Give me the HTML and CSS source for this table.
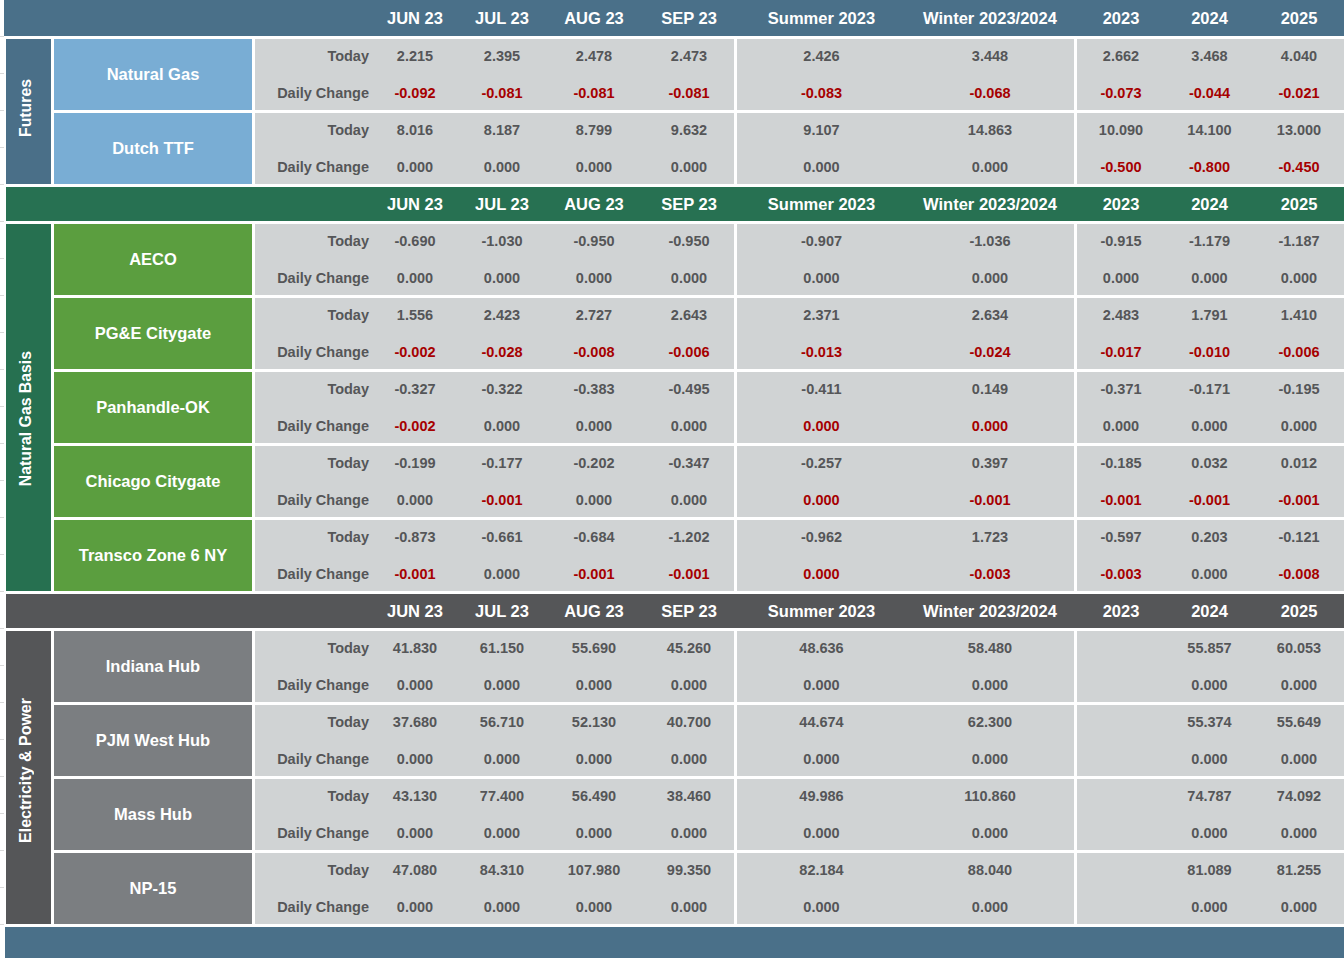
FILE: index.html
```html
<!DOCTYPE html>
<html>
<head>
<meta charset="utf-8">
<link rel="stylesheet" href="styles.css">
</head>
<body>
<div class="page">
  <div class="hdr hdr-top">
    <div class="spacer"></div>
    <div class="data">
      <div class="blk bm"><div></div><div>JUN 23</div><div>JUL 23</div><div>AUG 23</div><div>SEP 23</div></div>
      <div class="blk bs"><div>Summer 2023</div><div>Winter 2023/2024</div></div>
      <div class="blk by"><div>2023</div><div>2024</div><div>2025</div></div>
    </div>
  </div>

  <section class="group g-fut">
    <div class="glabel"><span>Futures</span></div>
    <div class="grows">
      <div class="row">
        <div class="name">Natural Gas</div>
        <div class="data">
          <div class="blk bm"><div class="lbl">Today</div><div>2.215</div><div>2.395</div><div>2.478</div><div>2.473</div><div class="lbl">Daily Change</div><div class="neg">-0.092</div><div class="neg">-0.081</div><div class="neg">-0.081</div><div class="neg">-0.081</div></div>
          <div class="blk bs"><div>2.426</div><div>3.448</div><div class="neg">-0.083</div><div class="neg">-0.068</div></div>
          <div class="blk by"><div>2.662</div><div>3.468</div><div>4.040</div><div class="neg">-0.073</div><div class="neg">-0.044</div><div class="neg">-0.021</div></div>
        </div>
      </div>
      <div class="row">
        <div class="name">Dutch TTF</div>
        <div class="data">
          <div class="blk bm"><div class="lbl">Today</div><div>8.016</div><div>8.187</div><div>8.799</div><div>9.632</div><div class="lbl">Daily Change</div><div>0.000</div><div>0.000</div><div>0.000</div><div>0.000</div></div>
          <div class="blk bs"><div>9.107</div><div>14.863</div><div>0.000</div><div>0.000</div></div>
          <div class="blk by"><div>10.090</div><div>14.100</div><div>13.000</div><div class="neg">-0.500</div><div class="neg">-0.800</div><div class="neg">-0.450</div></div>
        </div>
      </div>
    </div>
  </section>

  <div class="hdr hdr-gas">
    <div class="spacer"></div>
    <div class="data">
      <div class="blk bm"><div></div><div>JUN 23</div><div>JUL 23</div><div>AUG 23</div><div>SEP 23</div></div>
      <div class="blk bs"><div>Summer 2023</div><div>Winter 2023/2024</div></div>
      <div class="blk by"><div>2023</div><div>2024</div><div>2025</div></div>
    </div>
  </div>

  <section class="group g-gas">
    <div class="glabel"><span>Natural Gas Basis</span></div>
    <div class="grows">
      <div class="row">
        <div class="name">AECO</div>
        <div class="data">
          <div class="blk bm"><div class="lbl">Today</div><div>-0.690</div><div>-1.030</div><div>-0.950</div><div>-0.950</div><div class="lbl">Daily Change</div><div>0.000</div><div>0.000</div><div>0.000</div><div>0.000</div></div>
          <div class="blk bs"><div>-0.907</div><div>-1.036</div><div>0.000</div><div>0.000</div></div>
          <div class="blk by"><div>-0.915</div><div>-1.179</div><div>-1.187</div><div>0.000</div><div>0.000</div><div>0.000</div></div>
        </div>
      </div>
      <div class="row">
        <div class="name">PG&amp;E Citygate</div>
        <div class="data">
          <div class="blk bm"><div class="lbl">Today</div><div>1.556</div><div>2.423</div><div>2.727</div><div>2.643</div><div class="lbl">Daily Change</div><div class="neg">-0.002</div><div class="neg">-0.028</div><div class="neg">-0.008</div><div class="neg">-0.006</div></div>
          <div class="blk bs"><div>2.371</div><div>2.634</div><div class="neg">-0.013</div><div class="neg">-0.024</div></div>
          <div class="blk by"><div>2.483</div><div>1.791</div><div>1.410</div><div class="neg">-0.017</div><div class="neg">-0.010</div><div class="neg">-0.006</div></div>
        </div>
      </div>
      <div class="row">
        <div class="name">Panhandle-OK</div>
        <div class="data">
          <div class="blk bm"><div class="lbl">Today</div><div>-0.327</div><div>-0.322</div><div>-0.383</div><div>-0.495</div><div class="lbl">Daily Change</div><div class="neg">-0.002</div><div>0.000</div><div>0.000</div><div>0.000</div></div>
          <div class="blk bs"><div>-0.411</div><div>0.149</div><div class="neg">0.000</div><div class="neg">0.000</div></div>
          <div class="blk by"><div>-0.371</div><div>-0.171</div><div>-0.195</div><div>0.000</div><div>0.000</div><div>0.000</div></div>
        </div>
      </div>
      <div class="row">
        <div class="name">Chicago Citygate</div>
        <div class="data">
          <div class="blk bm"><div class="lbl">Today</div><div>-0.199</div><div>-0.177</div><div>-0.202</div><div>-0.347</div><div class="lbl">Daily Change</div><div>0.000</div><div class="neg">-0.001</div><div>0.000</div><div>0.000</div></div>
          <div class="blk bs"><div>-0.257</div><div>0.397</div><div class="neg">0.000</div><div class="neg">-0.001</div></div>
          <div class="blk by"><div>-0.185</div><div>0.032</div><div>0.012</div><div class="neg">-0.001</div><div class="neg">-0.001</div><div class="neg">-0.001</div></div>
        </div>
      </div>
      <div class="row">
        <div class="name">Transco Zone 6 NY</div>
        <div class="data">
          <div class="blk bm"><div class="lbl">Today</div><div>-0.873</div><div>-0.661</div><div>-0.684</div><div>-1.202</div><div class="lbl">Daily Change</div><div class="neg">-0.001</div><div>0.000</div><div class="neg">-0.001</div><div class="neg">-0.001</div></div>
          <div class="blk bs"><div>-0.962</div><div>1.723</div><div class="neg">0.000</div><div class="neg">-0.003</div></div>
          <div class="blk by"><div>-0.597</div><div>0.203</div><div>-0.121</div><div class="neg">-0.003</div><div>0.000</div><div class="neg">-0.008</div></div>
        </div>
      </div>
    </div>
  </section>

  <div class="hdr hdr-pow">
    <div class="spacer"></div>
    <div class="data">
      <div class="blk bm"><div></div><div>JUN 23</div><div>JUL 23</div><div>AUG 23</div><div>SEP 23</div></div>
      <div class="blk bs"><div>Summer 2023</div><div>Winter 2023/2024</div></div>
      <div class="blk by"><div>2023</div><div>2024</div><div>2025</div></div>
    </div>
  </div>

  <section class="group g-pow">
    <div class="glabel"><span>Electricity &amp; Power</span></div>
    <div class="grows">
      <div class="row">
        <div class="name">Indiana Hub</div>
        <div class="data">
          <div class="blk bm"><div class="lbl">Today</div><div>41.830</div><div>61.150</div><div>55.690</div><div>45.260</div><div class="lbl">Daily Change</div><div>0.000</div><div>0.000</div><div>0.000</div><div>0.000</div></div>
          <div class="blk bs"><div>48.636</div><div>58.480</div><div>0.000</div><div>0.000</div></div>
          <div class="blk by"><div></div><div>55.857</div><div>60.053</div><div></div><div>0.000</div><div>0.000</div></div>
        </div>
      </div>
      <div class="row">
        <div class="name">PJM West Hub</div>
        <div class="data">
          <div class="blk bm"><div class="lbl">Today</div><div>37.680</div><div>56.710</div><div>52.130</div><div>40.700</div><div class="lbl">Daily Change</div><div>0.000</div><div>0.000</div><div>0.000</div><div>0.000</div></div>
          <div class="blk bs"><div>44.674</div><div>62.300</div><div>0.000</div><div>0.000</div></div>
          <div class="blk by"><div></div><div>55.374</div><div>55.649</div><div></div><div>0.000</div><div>0.000</div></div>
        </div>
      </div>
      <div class="row">
        <div class="name">Mass Hub</div>
        <div class="data">
          <div class="blk bm"><div class="lbl">Today</div><div>43.130</div><div>77.400</div><div>56.490</div><div>38.460</div><div class="lbl">Daily Change</div><div>0.000</div><div>0.000</div><div>0.000</div><div>0.000</div></div>
          <div class="blk bs"><div>49.986</div><div>110.860</div><div>0.000</div><div>0.000</div></div>
          <div class="blk by"><div></div><div>74.787</div><div>74.092</div><div></div><div>0.000</div><div>0.000</div></div>
        </div>
      </div>
      <div class="row">
        <div class="name">NP-15</div>
        <div class="data">
          <div class="blk bm"><div class="lbl">Today</div><div>47.080</div><div>84.310</div><div>107.980</div><div>99.350</div><div class="lbl">Daily Change</div><div>0.000</div><div>0.000</div><div>0.000</div><div>0.000</div></div>
          <div class="blk bs"><div>82.184</div><div>88.040</div><div>0.000</div><div>0.000</div></div>
          <div class="blk by"><div></div><div>81.089</div><div>81.255</div><div></div><div>0.000</div><div>0.000</div></div>
        </div>
      </div>
    </div>
  </section>

  <div class="footbar"></div>
</div>
</body>
</html>
```

FILE: styles.css
```css
* { box-sizing: border-box; }

html, body { height: 100%; }

body {
  margin: 0;
  width: 1344px;
  overflow: hidden;
  font-family: "Liberation Sans", Arial, sans-serif;
  font-weight: bold;
  color: #555658;
  background-color: #fff;
  background-image:
    repeating-linear-gradient(to bottom, transparent 0, transparent 36px, #d9d9d9 36px, #d9d9d9 37px);
  background-size: 4px 100%;
  background-position: left top;
  background-repeat: no-repeat;
}

.page {
  display: flex;
  flex-direction: column;
  gap: 3px;
}

/* header bars */
.hdr {
  display: flex;
  height: 34px;
  margin-left: 6px;
  color: #fff;
  font-size: 16.5px;
}
.hdr-top { height: 36px; margin-left: 4px; padding-left: 2px; background: #4a7089; }
.hdr-gas { background: #277152; }
.hdr-pow { background: #555658; }
.hdr .spacer { width: 249px; flex: none; }
.hdr .blk { background: transparent; grid-template-rows: 1fr; row-gap: 0; }

/* groups */
.group {
  display: flex;
  gap: 3px;
  margin-left: 6px;
}
.glabel {
  width: 45px;
  flex: none;
  display: flex;
  align-items: center;
  justify-content: center;
  padding-right: 6px;
  color: #fff;
  font-size: 15.8px;
}
.glabel span {
  writing-mode: vertical-rl;
  transform: rotate(180deg);
  white-space: nowrap;
}
.g-fut .glabel { background: #4a6f88; padding-bottom: 7px; }
.g-gas .glabel { background: #267050; padding-top: 22px; }
.g-pow .glabel { background: #555658; padding-bottom: 14px; font-size: 16px; }

.grows {
  flex: 1;
  display: flex;
  flex-direction: column;
  gap: 3px;
}
.row {
  display: flex;
  gap: 3px;
  height: 71px;
}
.name {
  width: 198px;
  flex: none;
  display: flex;
  align-items: center;
  justify-content: center;
  color: #fff;
  font-size: 16.5px;
}
.g-fut .name { background: #79add4; }
.g-gas .name { background: #5b9e3f; }
.g-pow .name { background: #7b7e81; }

/* data blocks */
.data {
  flex: 1;
  display: flex;
  gap: 3px;
}
.blk {
  display: grid;
  grid-template-rows: 34px 34px;
  row-gap: 3px;
  background: #d0d3d4;
  font-size: 14.5px;
}
.hdr .blk { font-size: 16.5px; }
.blk > div {
  display: flex;
  align-items: center;
  justify-content: center;
  white-space: nowrap;
}
.bm { width: 479px; flex: none; grid-template-columns: 115px 90px 84px 100px 90px; }
.bs { width: 337px; flex: none; grid-template-columns: 169px 168px; }
.by { flex: 1; grid-template-columns: 88px 89px 1fr; }

.blk > .lbl { justify-content: flex-end; padding-right: 1px; }
.blk > .neg { color: #a60000; }

.footbar {
  height: 40px;
  margin-left: 5px;
  background: #4a7089;
}
```
